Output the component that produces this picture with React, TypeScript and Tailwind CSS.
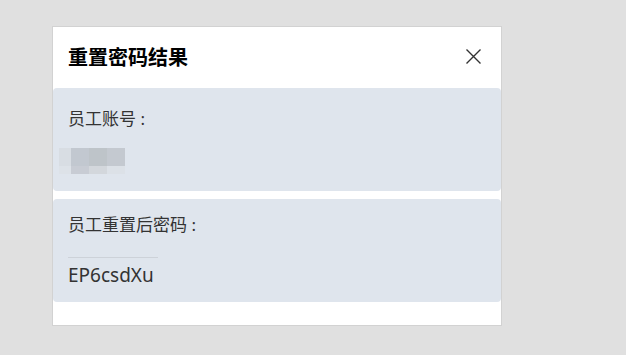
const BLUR_TOP = ["bg-[#d8dde3]", "bg-[#c2c8d0]", "bg-[#bec4c9]", "bg-[#c4c9d0]"];
const BLUR_BOTTOM = ["bg-[#dde2e8]", "bg-[#c8ccd4]", "bg-[#d3d7dc]", "bg-[#dce1e7]"];
const BLUR_WIDTHS = ["w-[12px]", "w-[18px]", "w-[18px]", "w-[18px]"];

function BlurredValue() {
  return (
    <div className="flex flex-col">
      <div className="flex h-[18px]">
        {BLUR_TOP.map((c, i) => (
          <div key={i} className={`${BLUR_WIDTHS[i]} ${c}`} />
        ))}
      </div>
      <div className="flex h-[8px]">
        {BLUR_BOTTOM.map((c, i) => (
          <div key={i} className={`${BLUR_WIDTHS[i]} ${c}`} />
        ))}
      </div>
    </div>
  );
}

export default function App() {
  return (
    <div
      className="h-[355px] w-[626px] bg-[#e0e0e0] pt-[26px] pl-[52px]"
      style={{ fontFamily: '"Noto Sans", "Noto Sans CJK SC", sans-serif' }}
    >
      <div className="flex h-[300px] w-[450px] flex-col border border-[#d2d2d2] bg-white">
        {/* Header */}
        <div className="flex h-[61px] items-center justify-between pl-[15px] pr-[19px]">
          <h2 className="text-[20px] font-bold text-black">重置密码结果</h2>
          <svg width="17" height="17" viewBox="0 0 17 17" className="-mt-[3px] text-[#333]">
            <path d="M1.5 1.5 L15.5 15.5 M15.5 1.5 L1.5 15.5" stroke="currentColor" strokeWidth="1.4" />
          </svg>
        </div>

        {/* Account */}
        <div className="h-[103px] rounded-[4px] bg-[#dfe5ed] pt-[19px] pl-[15px]">
          <p className="text-[17px] leading-[24px] text-[#333]">员工账号 :</p>
          <div className="mt-[17px] -ml-[9px]">
            <BlurredValue />
          </div>
        </div>

        {/* Password */}
        <div className="mt-[8px] h-[103px] rounded-[4px] bg-[#dfe5ed] pt-[14px] pl-[15px]">
          <p className="text-[17px] leading-[24px] text-[#333]">员工重置后密码 :</p>
          <div className="mt-[20px] h-px w-[90px] bg-[#cdd2d9]" />
          <p className="mt-[4px] text-[19px] leading-[26px] text-[#333]">EP6csdXu</p>
        </div>
      </div>
    </div>
  );
}
